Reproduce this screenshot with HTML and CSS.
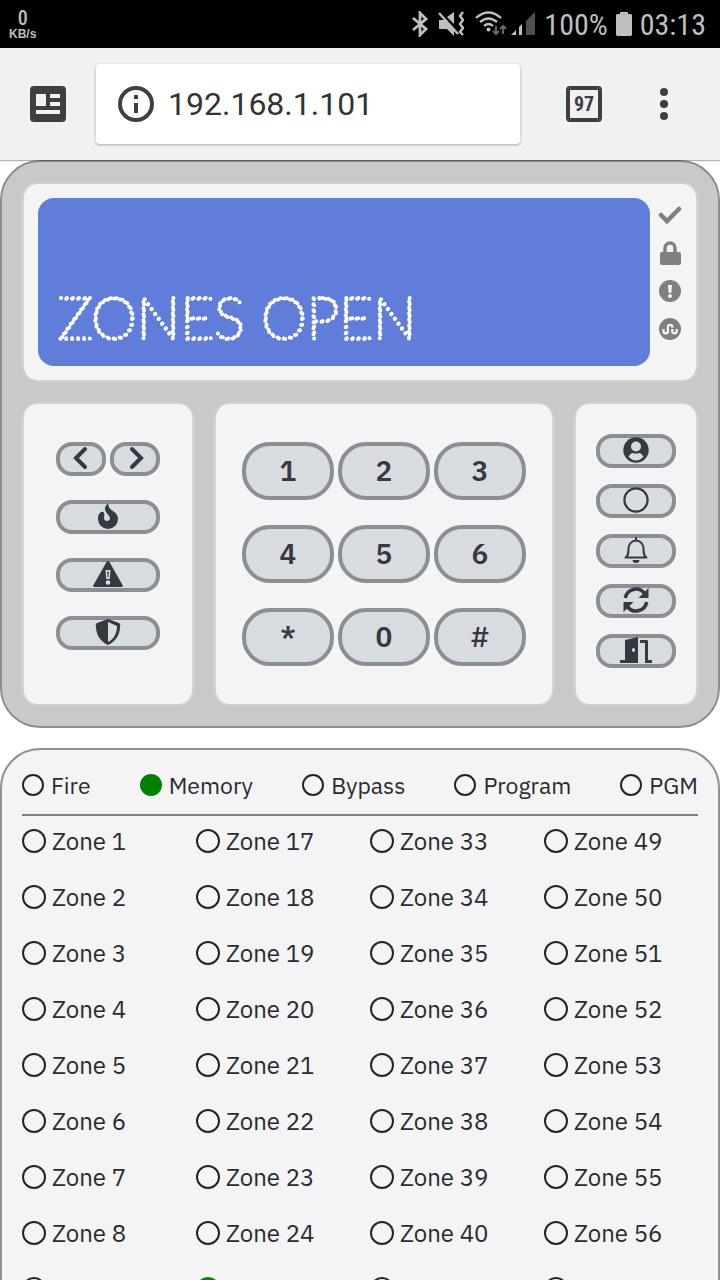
FILE: index.html
```html
<!DOCTYPE html>
<html lang="en">
<head>
<meta charset="utf-8">
<meta name="viewport" content="width=device-width, initial-scale=1">
<title>Alarm keypad</title>
<link rel="stylesheet" href="styles.css">
</head>
<body>
<div class="statusbar">
  <div class="speed"><span class="speed-value">0</span><span class="speed-unit">KB/s</span></div>
  <div class="tray">
    <svg width="16" height="26" viewBox="0 0 16 26" fill="none" stroke="currentColor" stroke-width="2.8"><path d="M1 7l13 11-6 6V2l6 6L1 19"/></svg>
    <svg class="mute" width="26" height="26" viewBox="0 0 26 26"><path fill="currentColor" d="M1 9h6l9 9v7l-7-7H1zM9 6l7-5v12z"/><path d="M1 2l19 21" stroke="currentColor" stroke-width="2.4"/><path d="M25 1l-3 4 3 4-3 4 3 4-3 4 3 3" fill="none" stroke="currentColor" stroke-width="2.400"/></svg>
    <svg class="wifi" width="33" height="26" viewBox="0 0 33 26" fill="none" stroke="currentColor" stroke-width="2.300"><path d="M1 7Q13.500-4 26 7M5 11q8.500-7 17 0M9 15q4.500-4 9 0"/><circle cx="13.500" cy="18.500" r="2" fill="currentColor" stroke="none"/><path d="M21 15v8m-3-3l3 3 3-3M28 23v-8m-3 3l3-3 3 3" stroke="#666" stroke-width="2"/></svg>
    <svg class="signal" width="25" height="26" viewBox="0 0 25 26"><path fill="currentColor" d="M0 24l5-5v5zM8 16l3-3v11H8z"/><path fill="#505050" d="M15 10l9-9v23h-9z"/></svg>
    <span class="percent">100%</span>
    <svg class="battery" width="16" height="24" viewBox="0 0 16 24"><path fill="currentColor" d="M4 0h8v2h3l1 1v20l-1 1H1l-1-1V3l1-1h3z"/></svg>
    <span>03:13</span>
  </div>
</div>

<header class="toolbar">
  <button type="button" class="tool" aria-label="Reader view"><svg width="36" height="36" viewBox="0 0 36 36"><rect width="36" height="36" rx="4" fill="#3c4043"/><path fill="#f1f1f1" d="M6 8h10v12H6zM20 8h10v4H20zM20 16h10v4H20zM6 24h24v4H6z"/></svg></button>
  <div class="omnibox">
    <svg width="36" height="36" viewBox="0 0 36 36"><circle cx="18" cy="18" r="16" fill="none" stroke="#3c4043" stroke-width="4"/><path fill="#3c4043" d="M16 9h4v4h-4zM16 17h4v10h-4z"/></svg>
    <input class="address" type="text" value="192.168.1.101" aria-label="Address">
  </div>
  <button type="button" class="tool tabs" aria-label="97 open tabs">97</button>
  <button type="button" class="tool more" aria-label="Menu"><svg width="24" height="36" viewBox="0 0 24 36" fill="#3c4043"><circle cx="12" cy="6" r="4"/><circle cx="12" cy="18" r="4"/><circle cx="12" cy="30" r="4"/></svg></button>
</header>

<main class="page">
  <section class="keypad">
    <div class="card display">
      <div class="lcd"><svg class="lcd-text"><text x="0" y="49">ZONES OPEN</text></svg></div>
      <div class="lamps">
        <svg viewBox="0 0 24 24" width="24" height="24"><path d="M3 12l6 6L21 6" fill="none" stroke="currentColor" stroke-width="4.500" stroke-linecap="round"/></svg>
        <svg viewBox="0 0 24 24" width="24" height="24"><path d="M7 12V7a5 5 0 0 1 10 0v5" fill="none" stroke="currentColor" stroke-width="3.500"/><rect x="2" y="11" width="21" height="13" rx="2" fill="currentColor"/></svg>
        <svg viewBox="0 0 24 24" width="24" height="24"><circle cx="12" cy="12" r="11" fill="currentColor"/><path fill="#f4f4f4" d="M10 6h4l-.600 8h-2.800z"/><circle cx="12" cy="17" r="2" fill="#f4f4f4"/></svg>
        <svg viewBox="0 0 24 24" width="24" height="24"><circle cx="12" cy="12" r="11" fill="currentColor"/><path d="M5.500 12v2.200a2.200 2.200 0 0 0 4.400 0V10a2.200 2.200 0 0 1 4.400 0v.8M14.300 12v2.200a2.200 2.200 0 0 0 4.400 0V12" fill="none" stroke="#f4f4f4" stroke-width="2.200"/></svg>
      </div>
    </div>
    <div class="card functions">
      <div class="arrows">
        <button class="key" aria-label="Left"><svg width="28" height="28" viewBox="0 0 28 28"><path d="M18 5L9 14l9 9" fill="none" stroke="currentColor" stroke-width="4" stroke-linecap="round" stroke-linejoin="miter"/></svg></button>
        <button class="key" aria-label="Right"><svg width="28" height="28" viewBox="0 0 28 28"><path d="M11 5l9 9-9 9" fill="none" stroke="currentColor" stroke-width="4" stroke-linecap="round" stroke-linejoin="miter"/></svg></button>
      </div>
      <button class="key" aria-label="Fire"><svg width="28" height="28" viewBox="0 0 28 28"><path fill="currentColor" d="M14 1c-3 3-4 6-2 9 2 3 4 4 4 6.500 0 1.500-1.500 2.500-3 2.500s-3-1-3-3c0-2 1-4-.500-6C6.500 9 4 12 4 17a10 10 0 0 0 20 0c0-8-9-8-9.500-13.500z"/></svg></button>
      <button class="key" aria-label="Alert"><svg width="30" height="28" viewBox="0 0 30 28"><path fill="currentColor" d="M13.500 2q1.500-2 3 0l13 23q1 2-1 2H1.500q-2 0-1-2z"/><path fill="#d8dce0" d="M12.500 10h5l-.700 9h-3.600z"/><path fill="currentColor" d="M14.200 11.500h1.600l-.400 6h-.800z"/><circle cx="15" cy="22.500" r="2.300" fill="#d8dce0"/></svg></button>
      <button class="key" aria-label="Police"><svg width="28" height="28" viewBox="0 0 28 28"><path fill="currentColor" fill-rule="evenodd" d="M14 1l11 4q2 1 1 4c0 8-5 15-12 18C7 24 2 17 2 9q-1-3 1-4zM14 4v20c6-3 9-9 9-16z"/></svg></button>
    </div>
    <div class="card digits">
      <button class="key">1</button><button class="key">2</button><button class="key">3</button>
      <button class="key">4</button><button class="key">5</button><button class="key">6</button>
      <button class="key">*</button><button class="key">0</button><button class="key">#</button>
    </div>
    <div class="card modes">
      <button class="key" aria-label="Stay"><svg width="28" height="28" viewBox="0 0 28 28"><circle cx="14" cy="14" r="12.700" fill="currentColor"/><circle cx="14" cy="10.500" r="5" fill="#d8dce0"/><path fill="#d8dce0" d="M6.500 21c1.500-3 3-4 4.500-4q3 1 6 0c1.500 0 3 1 4.500 4q-7.500 7-15 0z"/></svg></button>
      <button class="key" aria-label="Away"><svg width="28" height="28" viewBox="0 0 28 28"><circle cx="14" cy="14" r="11.600" fill="none" stroke="currentColor" stroke-width="2.200"/></svg></button>
      <button class="key" aria-label="Chime"><svg width="28" height="28" viewBox="0 0 28 28"><path d="M14 1v3M3.500 21.500c3-2 3-5 3-9a7.500 8 0 0 1 15 0c0 4 0 7 3 9z" fill="none" stroke="currentColor" stroke-width="2" stroke-linejoin="round"/><path fill="currentColor" d="M10.500 24h7a3.500 3 0 0 1-7 0z"/></svg></button>
      <button class="key" aria-label="Reset"><svg width="28" height="28" viewBox="0 0 28 28"><path d="M3.300 12a10.800 10.800 0 0 1 19-5M24.700 16a10.800 10.800 0 0 1-19 5" fill="none" stroke="currentColor" stroke-width="3.600"/><path fill="currentColor" d="M26.500 2v10h-10zM1.500 26V16h10z"/></svg></button>
      <button class="key" aria-label="Exit"><svg width="34" height="28" viewBox="0 0 34 28"><path fill="currentColor" fill-rule="evenodd" d="M6 4l13-3v26H1v-3h5zM14.500 12a1.500 2 0 1 0 0 4 1.500 2 0 0 0 0-4z"/><path fill="currentColor" d="M21 4h7q1 0 1 1v19h4v3h-7V7h-5z"/></svg></button>
    </div>
  </section>

  <section class="zones-panel">
    <ul class="system">
      <li><span class="led"></span>Fire</li>
      <li><span class="led on"></span>Memory</li>
      <li><span class="led"></span>Bypass</li>
      <li><span class="led"></span>Program</li>
      <li><span class="led"></span>PGM</li>
    </ul>
    <div class="zones">
      <ul>
        <li><span class="led"></span>Zone 1</li>
        <li><span class="led"></span>Zone 2</li>
        <li><span class="led"></span>Zone 3</li>
        <li><span class="led"></span>Zone 4</li>
        <li><span class="led"></span>Zone 5</li>
        <li><span class="led"></span>Zone 6</li>
        <li><span class="led"></span>Zone 7</li>
        <li><span class="led"></span>Zone 8</li>
        <li><span class="led"></span>Zone 9</li>
      </ul>
      <ul>
        <li><span class="led"></span>Zone 17</li>
        <li><span class="led"></span>Zone 18</li>
        <li><span class="led"></span>Zone 19</li>
        <li><span class="led"></span>Zone 20</li>
        <li><span class="led"></span>Zone 21</li>
        <li><span class="led"></span>Zone 22</li>
        <li><span class="led"></span>Zone 23</li>
        <li><span class="led"></span>Zone 24</li>
        <li><span class="led on"></span>Zone 25</li>
      </ul>
      <ul>
        <li><span class="led"></span>Zone 33</li>
        <li><span class="led"></span>Zone 34</li>
        <li><span class="led"></span>Zone 35</li>
        <li><span class="led"></span>Zone 36</li>
        <li><span class="led"></span>Zone 37</li>
        <li><span class="led"></span>Zone 38</li>
        <li><span class="led"></span>Zone 39</li>
        <li><span class="led"></span>Zone 40</li>
        <li><span class="led"></span>Zone 41</li>
      </ul>
      <ul>
        <li><span class="led"></span>Zone 49</li>
        <li><span class="led"></span>Zone 50</li>
        <li><span class="led"></span>Zone 51</li>
        <li><span class="led"></span>Zone 52</li>
        <li><span class="led"></span>Zone 53</li>
        <li><span class="led"></span>Zone 54</li>
        <li><span class="led"></span>Zone 55</li>
        <li><span class="led"></span>Zone 56</li>
        <li><span class="led"></span>Zone 57</li>
      </ul>
    </div>
  </section>
</main>
</body>
</html>
```
FILE: styles.css
```css
* { box-sizing: border-box; }
body {
  margin: 0;
  height: 100vh;
  display: flex;
  flex-direction: column;
  overflow: hidden;
  background: #fff;
  color: #272b30;
  font-family: "IBM Plex Sans", Roboto, sans-serif;
}
ul { list-style: none; margin: 0; padding: 0; }
button { padding: 0; font: inherit; color: inherit; }
svg { display: block; flex: none; }

.statusbar {
  flex: none;
  display: flex;
  justify-content: space-between;
  align-items: center;
  height: 48px;
  padding: 0 14px 0 9px;
  background: #000;
  color: #bfbfbf;
  font-family: "Roboto Condensed", Roboto, sans-serif;
  font-size: 30px;
}
.speed { display: flex; flex-direction: column; align-items: center; }
.speed-value { font-size: 20px; line-height: 20px; font-weight: 500; }
.speed-unit { font-family: "Liberation Sans", sans-serif; font-size: 12px; line-height: 12px; font-weight: bold; }
.tray { display: flex; align-items: center; }
.mute { margin-left: 10px; }
.wifi { margin-left: 11px; }
.signal { margin-left: 3px; }
.percent { margin-left: 8px; }
.battery { margin: 0 8px; }

.toolbar {
  flex: none;
  position: relative;
  display: flex;
  align-items: center;
  height: 112px;
  padding: 0 44px 0 30px;
  background: #f1f1f1;
  box-shadow: 0 1px 1px rgba(0, 0, 0, .3);
  font-family: Roboto, sans-serif;
  color: #3c4043;
}
.tool { flex: none; border: 0; background: none; }
.omnibox {
  flex: 1;
  min-width: 0;
  display: flex;
  align-items: center;
  gap: 14px;
  height: 80px;
  margin: 0 46px 0 30px;
  padding: 0 22px;
  border-radius: 4px;
  background: #fff;
  box-shadow: 0 1px 3px rgba(0, 0, 0, .3);
}
.address {
  flex: 1;
  min-width: 0;
  padding: 0;
  border: 0;
  background: none;
  color: #333;
  font: 32px Roboto, sans-serif;
}
.tabs {
  width: 36px;
  height: 36px;
  border: 4px solid #3c4043;
  border-radius: 4px;
  font-family: "Roboto Condensed", Roboto, sans-serif;
  font-size: 20px;
  line-height: 28px;
  font-weight: bold;
}
.more { margin-left: 50px; }

.page { flex: 1; min-height: 0; overflow: hidden; }
.keypad {
  display: grid;
  grid-template-columns: 172fr 340fr 124fr;
  gap: 20px;
  padding: 20px;
  border: 2px solid #8f8f8f;
  border-radius: 40px;
  background: #c9c9c9;
}
.card {
  border: 2px solid #d3d3d3;
  border-radius: 16px;
  background: #f4f4f4;
}
.display {
  grid-column: 1 / -1;
  display: flex;
  gap: 8px;
  padding: 14px;
}
.lcd {
  flex: 1;
  display: flex;
  align-items: flex-end;
  height: 168px;
  padding: 20px;
  border-radius: 16px;
  background: #5f7dd9;
}
.lcd-text { width: 100%; height: 56px; overflow: visible; }
.lcd-text text {
  font-family: Lato, sans-serif;
  font-size: 58px;
  font-weight: 100;
  fill: none;
  stroke: #fff;
  stroke-width: 4px;
  stroke-linecap: round;
  stroke-dasharray: 0 6;
}
.lamps {
  display: flex;
  flex-direction: column;
  gap: 14px;
  padding-top: 5px;
  color: #808080;
}

.key {
  display: flex;
  justify-content: center;
  align-items: center;
  min-width: 0;
  height: 34px;
  border: 4px solid #8a8f95;
  border-radius: 16px;
  background: #d8dce0;
  color: #343a40;
}
.key svg { margin-bottom: 2px; }
.functions { display: flex; flex-direction: column; gap: 24px; padding: 38px 32px; }
.arrows { display: flex; gap: 4px; }
.arrows .key { flex: 1; }
.modes { display: flex; flex-direction: column; gap: 16px; padding: 30px 20px; }
.digits {
  display: grid;
  grid-template-columns: repeat(3, 1fr);
  gap: 25px 4px;
  padding: 38px 26px;
}
.digits .key {
  height: 58px;
  padding-bottom: 2px;
  border-radius: 28px;
  font-size: 28px;
  font-weight: 600;
}

.zones-panel {
  margin-top: 20px;
  padding: 0 20px 20px;
  border: 2px solid #8f8f8f;
  border-radius: 40px;
  background: #f4f4f4;
  line-height: 28px;
}
.zones-panel li { display: flex; align-items: center; }
.led {
  flex: none;
  width: 24px;
  height: 24px;
  border: 2px solid #212529;
  border-radius: 50%;
}
.led.on { border-color: #008000; background: #008000; }
.system {
  display: flex;
  justify-content: space-between;
  padding: 21px 0 15px;
  border-bottom: 2px solid #808080;
  font-size: 23px;
}
.system li { gap: 7px; }
.system .led { width: 22px; height: 22px; }
.zones {
  display: grid;
  grid-template-columns: repeat(4, 1fr);
  column-gap: 20px;
  padding-top: 11px;
  font-size: 24px;
}
.zones ul { display: flex; flex-direction: column; gap: 28px; }
.zones li { gap: 6px; }
```
